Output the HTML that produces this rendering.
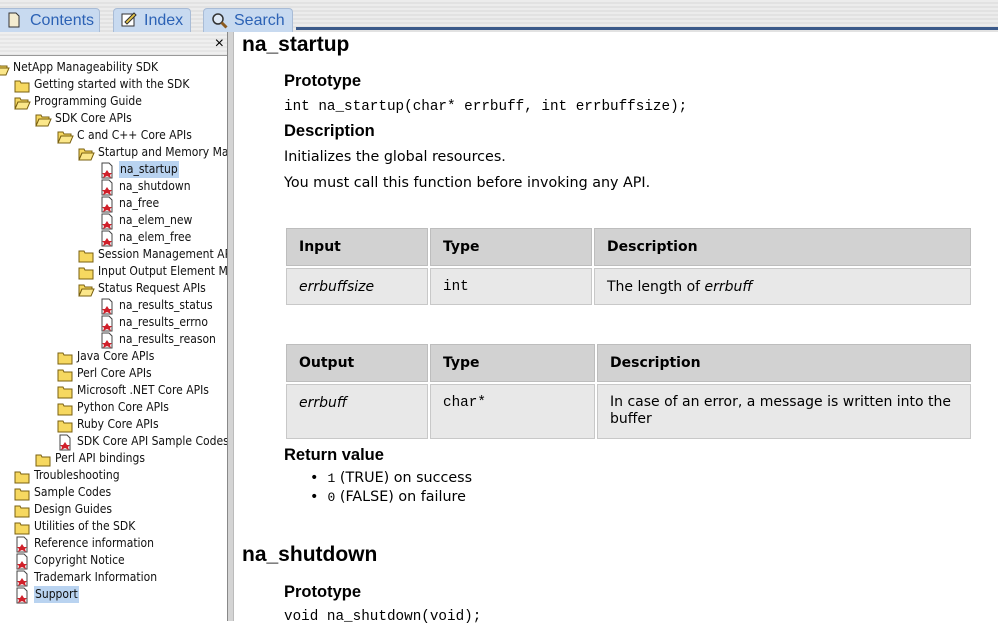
<!DOCTYPE html>
<html><head><meta charset="utf-8"><style>
*{margin:0;padding:0;box-sizing:border-box}
body{width:998px;height:621px;overflow:hidden;background:#fff;font-family:"DejaVu Sans",Verdana,sans-serif;position:relative}
.tabbar{position:absolute;left:0;top:0;width:998px;height:32px;background:repeating-linear-gradient(#ececec 0 2px,#e2e2e2 2px 4px)}
.tab{position:absolute;top:8px;height:24px;background:#c8daf0;border:1px solid #a9bcd6;border-bottom:none;border-radius:4px 4px 0 0;color:#2c62b5;font-family:"Liberation Sans",Arial,sans-serif;font-size:16px;line-height:24px;padding-left:30px}
.tab svg{position:absolute;left:7px;top:3px}
.blueline{position:absolute;left:296px;top:27px;width:702px;height:3px;background:#3b5a8a}
.lhead{position:absolute;left:0;top:32px;width:228px;height:24px;background:repeating-linear-gradient(#efefef 0 2px,#e6e6e6 2px 4px);border-bottom:1px solid #999}
.lhead span{position:absolute;right:4px;top:3px;font-size:16px;font-family:"Liberation Sans",sans-serif}
.split{position:absolute;left:227px;top:32px;width:7px;height:589px;background:#d4d4d4;border-left:1px solid #888;border-right:1px solid #bbb}
.tree{position:absolute;left:0;top:58px;width:227px;height:563px;overflow:hidden;font-family:"DejaVu Sans Condensed","DejaVu Sans",sans-serif;font-size:12px;color:#111;background:#fff}
.r{position:absolute;height:17px;line-height:17px;white-space:nowrap}
.r svg{position:absolute;left:0;top:1px}
.r b{font-weight:normal;position:absolute;left:20px}
.sel b{background:#b9d3f0;padding:0 1px}
h1{position:absolute;font-family:"Liberation Sans",Arial,sans-serif;font-size:21px;font-weight:bold;left:242px}
h3{position:absolute;font-family:"Liberation Sans",Arial,sans-serif;font-size:16.5px;font-weight:bold;left:284px}
.p{position:absolute;left:284px;font-size:14.3px}
.m{font-family:"Liberation Mono",monospace;font-size:14.3px}
table{position:absolute;left:284px;border-collapse:separate;border-spacing:2px;font-size:14px}
th{background:#d2d2d2;text-align:left;font-weight:bold;padding:0 12px;height:38px;border:1px solid #bdbdbd}
td{background:#e8e8e8;padding:0 12px;height:37px;border:1px solid #c8c8c8;vertical-align:top;padding-top:10px}
</style></head><body>
<div class="tabbar"></div>
<div class="tab" style="left:0;width:100px;border-left:none;border-radius:0 4px 0 0">
<svg width="14" height="16"><path d="M2 1h7l3 3v11H2z" fill="#f4ecd0" stroke="#333"/></svg>Contents</div>
<div class="tab" style="left:113px;width:78px"><svg width="18" height="16"><rect x="1" y="2" width="12" height="12" fill="#fff" stroke="#333"/><path d="M4 10l9-9 2 2-9 9z" fill="#e8c84a" stroke="#333"/></svg>Index</div>
<div class="tab" style="left:203px;width:90px"><svg width="18" height="18"><circle cx="7" cy="7" r="5" fill="#dfe9f5" stroke="#333" stroke-width="1.5"/><path d="M10.5 10.5l5 5" stroke="#8a5a20" stroke-width="3"/></svg>Search</div>
<div class="blueline"></div>
<div class="lhead"><span>×</span></div>
<div class="split"></div>
<div class="tree">
<svg width="0" height="0" style="position:absolute"><defs>
<g id="f"><path d="M1 4h5l1 2h8v9H1z" fill="#f6d860" stroke="#7a6010"/></g>
<g id="o"><path d="M1 4h5l1 2h7v2H4l-3 7z" fill="#f6d860" stroke="#7a6010"/><path d="M4 8h12l-3 7H1z" fill="#fbe78a" stroke="#7a6010"/></g>
<g id="d"><path d="M3 1h7l3 3v12H3z" fill="#fff" stroke="#444"/><path d="M8 8l2 3 3 0-2 2 1 3-4-2-4 2 1-3-2-2 3 0z" fill="#d0202a"/></g>
</defs></svg>
<div class="r" style="left:-7px;top:1px"><svg width="18" height="16"><use href="#o"/></svg><b>NetApp Manageability SDK</b></div>
<div class="r" style="left:14px;top:18px"><svg width="18" height="16"><use href="#f"/></svg><b>Getting started with the SDK</b></div>
<div class="r" style="left:14px;top:35px"><svg width="18" height="16"><use href="#o"/></svg><b>Programming Guide</b></div>
<div class="r" style="left:35px;top:52px"><svg width="18" height="16"><use href="#o"/></svg><b>SDK Core APIs</b></div>
<div class="r" style="left:57px;top:69px"><svg width="18" height="16"><use href="#o"/></svg><b>C and C++ Core APIs</b></div>
<div class="r" style="left:78px;top:86px"><svg width="18" height="16"><use href="#o"/></svg><b>Startup and Memory Management</b></div>
<div class="r sel" style="left:99px;top:103px"><svg width="18" height="17"><use href="#d"/></svg><b>na_startup</b></div>
<div class="r" style="left:99px;top:120px"><svg width="18" height="17"><use href="#d"/></svg><b>na_shutdown</b></div>
<div class="r" style="left:99px;top:137px"><svg width="18" height="17"><use href="#d"/></svg><b>na_free</b></div>
<div class="r" style="left:99px;top:154px"><svg width="18" height="17"><use href="#d"/></svg><b>na_elem_new</b></div>
<div class="r" style="left:99px;top:171px"><svg width="18" height="17"><use href="#d"/></svg><b>na_elem_free</b></div>
<div class="r" style="left:78px;top:188px"><svg width="18" height="16"><use href="#f"/></svg><b>Session Management APIs</b></div>
<div class="r" style="left:78px;top:205px"><svg width="18" height="16"><use href="#f"/></svg><b>Input Output Element Management</b></div>
<div class="r" style="left:78px;top:222px"><svg width="18" height="16"><use href="#o"/></svg><b>Status Request APIs</b></div>
<div class="r" style="left:99px;top:239px"><svg width="18" height="17"><use href="#d"/></svg><b>na_results_status</b></div>
<div class="r" style="left:99px;top:256px"><svg width="18" height="17"><use href="#d"/></svg><b>na_results_errno</b></div>
<div class="r" style="left:99px;top:273px"><svg width="18" height="17"><use href="#d"/></svg><b>na_results_reason</b></div>
<div class="r" style="left:57px;top:290px"><svg width="18" height="16"><use href="#f"/></svg><b>Java Core APIs</b></div>
<div class="r" style="left:57px;top:307px"><svg width="18" height="16"><use href="#f"/></svg><b>Perl Core APIs</b></div>
<div class="r" style="left:57px;top:324px"><svg width="18" height="16"><use href="#f"/></svg><b>Microsoft .NET Core APIs</b></div>
<div class="r" style="left:57px;top:341px"><svg width="18" height="16"><use href="#f"/></svg><b>Python Core APIs</b></div>
<div class="r" style="left:57px;top:358px"><svg width="18" height="16"><use href="#f"/></svg><b>Ruby Core APIs</b></div>
<div class="r" style="left:57px;top:375px"><svg width="18" height="17"><use href="#d"/></svg><b>SDK Core API Sample Codes</b></div>
<div class="r" style="left:35px;top:392px"><svg width="18" height="16"><use href="#f"/></svg><b>Perl API bindings</b></div>
<div class="r" style="left:14px;top:409px"><svg width="18" height="16"><use href="#f"/></svg><b>Troubleshooting</b></div>
<div class="r" style="left:14px;top:426px"><svg width="18" height="16"><use href="#f"/></svg><b>Sample Codes</b></div>
<div class="r" style="left:14px;top:443px"><svg width="18" height="16"><use href="#f"/></svg><b>Design Guides</b></div>
<div class="r" style="left:14px;top:460px"><svg width="18" height="16"><use href="#f"/></svg><b>Utilities of the SDK</b></div>
<div class="r" style="left:14px;top:477px"><svg width="18" height="17"><use href="#d"/></svg><b>Reference information</b></div>
<div class="r" style="left:14px;top:494px"><svg width="18" height="17"><use href="#d"/></svg><b>Copyright Notice</b></div>
<div class="r" style="left:14px;top:511px"><svg width="18" height="17"><use href="#d"/></svg><b>Trademark Information</b></div>
<div class="r sel" style="left:14px;top:528px"><svg width="18" height="17"><use href="#d"/></svg><b>Support</b></div>
</div>

<h1 style="top:33px">na_startup</h1>
<h3 style="top:72px">Prototype</h3>
<div class="p m" style="top:99px">int na_startup(char* errbuff, int errbuffsize);</div>
<h3 style="top:122px">Description</h3>
<div class="p" style="top:149px">Initializes the global resources.</div>
<div class="p" style="top:175px">You must call this function before invoking any API.</div>
<table style="top:226px;width:689px">
<tr><th style="width:142px">Input</th><th style="width:162px">Type</th><th>Description</th></tr>
<tr><td><i>errbuffsize</i></td><td class="m">int</td><td>The length of <i>errbuff</i></td></tr>
</table>
<table style="top:342px;width:689px">
<tr><th style="width:142px">Output</th><th style="width:165px">Type</th><th>Description</th></tr>
<tr><td style="height:55px"><i>errbuff</i></td><td class="m">char*</td><td style="padding-top:9px;line-height:17px">In case of an error, a message is written into the buffer</td></tr>
</table>
<h3 style="top:446px">Return value</h3>
<div class="p" style="top:470px;left:310px">•&nbsp; <span class="m" style="font-size:13px">1</span> (TRUE) on success</div>
<div class="p" style="top:489px;left:310px">•&nbsp; <span class="m" style="font-size:13px">0</span> (FALSE) on failure</div>
<h1 style="top:543px">na_shutdown</h1>
<h3 style="top:583px">Prototype</h3>
<div class="p m" style="top:609px">void na_shutdown(void);</div>
</body></html>
